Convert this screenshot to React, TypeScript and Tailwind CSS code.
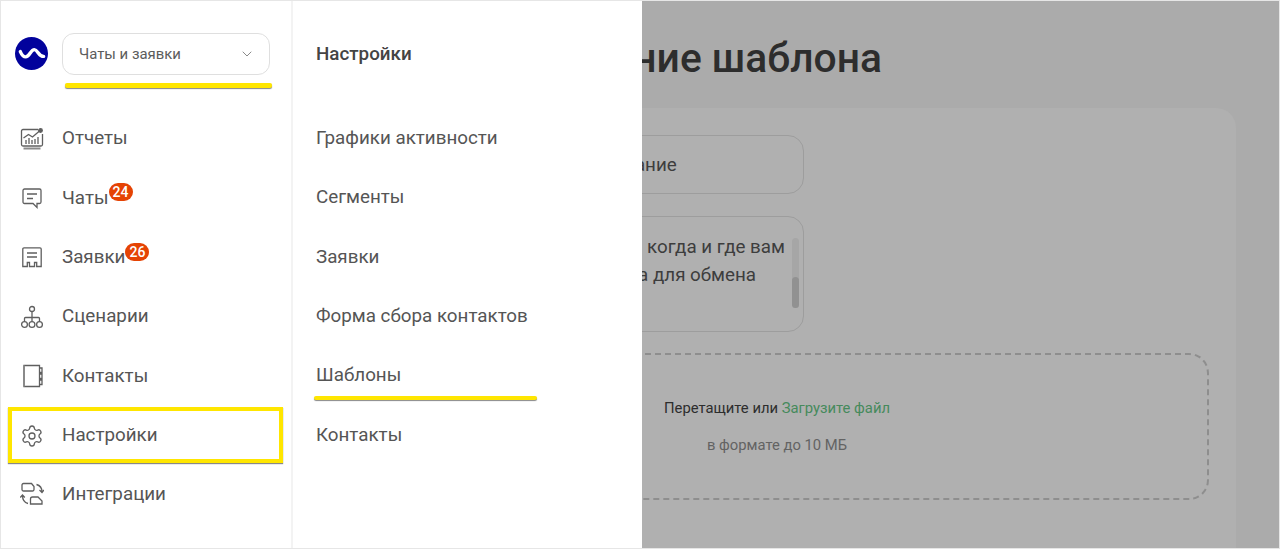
import { ChevronDown, Settings } from "lucide-react";
import type { ReactNode } from "react";

const iconClass = "h-6 w-6 fill-none stroke-[#5f5f5f] stroke-[1.3]";

function ReportsIcon() {
  return (
    <svg viewBox="0 0 24 24" className={iconClass}>
      <path d="M18 2.500H3a1.500 1.500 0 0 0-1.500 1.500v13.500A1.500 1.500 0 0 0 3 19h18a1.500 1.500 0 0 0 1.500-1.500V7" />
      <path d="M3.500 21.500h17" strokeWidth="2" stroke="#8a8a8a" />
      <path d="M3.500 11l5-3.500 4 2.500 7-6" />
      <path d="M6 17v-4M9 17v-6M12 17v-4M15 17v-5M18 17v-7" />
      <circle cx="20.500" cy="3.500" r="1.800" fill="#5f5f5f" />
    </svg>
  );
}

function ChatIcon() {
  return (
    <svg viewBox="0 0 24 24" className={iconClass}>
      <path d="M4.500 3h15A1.500 1.500 0 0 1 21 4.500V16a1.500 1.500 0 0 1-1.500 1.500H17v4l-4-4H4.500A1.500 1.500 0 0 1 3 16V4.500A1.500 1.500 0 0 1 4.500 3z" />
      <path d="M7 8h10M7 12.500h6" />
    </svg>
  );
}

function RequestsIcon() {
  return (
    <svg viewBox="0 0 24 24" className={iconClass}>
      <path d="M2.800 21.500V4a1.200 1.200 0 0 1 1.200-1.200h16A1.200 1.200 0 0 1 21.200 4v17.500h-4.500v-4h-2.200v4h-5v-4H7.300v4z" />
      <path d="M7 8h10M7 12h10" />
    </svg>
  );
}

function ScenariosIcon() {
  return (
    <svg viewBox="0 0 24 24" className={iconClass}>
      <circle cx="12" cy="4" r="2.500" />
      <circle cx="4.500" cy="19.500" r="2.900" />
      <circle cx="12" cy="19.500" r="2.900" />
      <circle cx="19.500" cy="19.500" r="2.900" />
      <path d="M12 6.500v10.100M4.500 16.600V13.500a1 1 0 0 1 1-1h13a1 1 0 0 1 1 1v3.100" />
    </svg>
  );
}

function ContactsIcon() {
  return (
    <svg viewBox="0 0 24 24" className={iconClass}>
      <path d="M4 1.500h15.500v21H4z" />
      <path d="M4 1.500v21" strokeWidth="2" stroke="#8a8a8a" />
      <path d="M19.500 4h2.500v4.500h-2.500M19.500 10h2.500v4.500h-2.500M19.500 16h2.500v4.500h-2.500" />
    </svg>
  );
}

function IntegrationsIcon() {
  return (
    <svg viewBox="0 0 24 24" className={iconClass}>
      <path d="M3.500 1.500h8l2.500 3v3a1.500 1.500 0 0 1-1.500 1.500h-9A1.500 1.500 0 0 1 2 7.500V3a1.500 1.500 0 0 1 1.500-1.500z" />
      <path d="M12.500 15h5.500l4 4v3H10.500v-5a2 2 0 0 1 2-2z" />
      <path d="M16.500 2.500c3 .8 5.500 3.500 5.500 7.500M19.500 8l2.500 2.500L24 8" />
      <path d="M8 21.500c-3-.8-5.500-3.500-5.500-8M.300 15.500l2.200-2.500 2.300 2.500" />
    </svg>
  );
}

const navItems: { label: string; icon: ReactNode; badge?: string; active?: boolean }[] = [
  { label: "Отчеты", icon: <ReportsIcon /> },
  { label: "Чаты", icon: <ChatIcon />, badge: "24" },
  { label: "Заявки", icon: <RequestsIcon />, badge: "26" },
  { label: "Сценарии", icon: <ScenariosIcon /> },
  { label: "Контакты", icon: <ContactsIcon /> },
  { label: "Настройки", icon: <Settings className="h-6 w-6 text-[#5f5f5f]" strokeWidth={1.3} />, active: true },
  { label: "Интеграции", icon: <IntegrationsIcon /> },
];

const subItems = ["Графики активности", "Сегменты", "Заявки", "Форма сбора контактов", "Шаблоны", "Контакты"];

function NavRow({ label, icon, badge, active }: (typeof navItems)[number]) {
  return (
    <div
      className={
        active
          ? "-ml-[1px] mb-[1.7px] mt-[0.7px] flex h-[56px] items-center gap-[18px] border-[4px] border-[#ffe600] pl-[8px] pt-[2px] shadow-[0_1px_1px_#888]"
          : "flex h-[59.4px] items-center gap-[18px] pl-[11px]"
      }
    >
      <span className="flex h-6 w-6 shrink-0 items-center justify-center">{icon}</span>
      <span className="relative text-[18.8px] leading-none text-[#555555]">
        {label}
        {badge ? (
          <span className="absolute bottom-[6px] left-full flex h-[18px] w-6 items-center justify-center rounded-full bg-[#e54304] text-[14px] font-medium text-white">
            {badge}
          </span>
        ) : null}
      </span>
    </div>
  );
}

export default function App() {
  return (
    <div className="flex h-[549px] w-[1280px] overflow-hidden border border-[#e6e6e6] bg-white font-['Roboto',sans-serif]">
      <aside className="w-[292px] shrink-0 border-r-2 border-[#f3f3f3] pl-[8px] pr-[8px]">
        <div className="flex items-start gap-[14px] pl-[6px] pt-[32px]">
          <svg viewBox="0 0 34 34" className="mt-[4px] h-[33px] w-[33px] shrink-0">
            <circle cx="17" cy="17" r="17" fill="#02029c" />
            <path d="M5.500 15c1.500 3.500 3 5.500 5.500 5.500 4 0 5-7.500 9-7.500 3.500 0 4 7 9.500 7" fill="none" stroke="#fff" strokeWidth="3.500" strokeLinecap="round" />
          </svg>
          <div className="flex-1">
            <div className="flex h-[42px] w-[208px] items-center justify-between rounded-[12px] border border-[#dfdfdf] pl-[16px] pr-[14px] text-[14.9px] text-[#5c5c5c]">
              Чаты и заявки
              <ChevronDown className="h-4 w-4 text-[#8a8a8a]" strokeWidth={1.5} />
            </div>
            <div className="ml-[3px] mt-[8px] h-[5px] w-[207px] rounded-[2px] bg-[#ffe600] shadow-[0_1px_1px_#888]" />
          </div>
        </div>
        <nav className="mt-[21px]">
          {navItems.map((item) => (
            <NavRow key={item.label} {...item} />
          ))}
        </nav>
      </aside>

      <section className="w-[349px] shrink-0 pl-[23px] pr-[20px] text-[18.8px] text-[#555555]">
        <h2 className="pt-[43px] text-[18.8px] font-medium leading-[21px] text-[#444444]">Настройки</h2>
        <ul className="mt-[43.3px]">
          {subItems.map((item) => (
            <li key={item} className="relative flex h-[59.4px] items-center">
              {item}
              {item === "Шаблоны" ? (
                <span className="absolute bottom-[5px] left-[-2px] h-[4px] w-[223px] rounded-[2px] bg-[#ffe600] shadow-[0_1px_1px_#888]" />
              ) : null}
            </li>
          ))}
        </ul>
      </section>

      <main className="min-w-0 flex-1 overflow-hidden bg-[#ababab] pt-[39px]">
        <h1 className="flex h-[36px] justify-end whitespace-nowrap pr-[397px] text-[40.8px] font-medium leading-[36px] text-[#2d2d2d]">
          Создание шаблона
        </h1>
        <div className="ml-[-324px] mr-[43px] mt-[32px] h-[480px] rounded-[20px] bg-[#b0b0b0] pl-[27px] pr-[27px] pt-[27px]">
          <div className="ml-[235px] w-[224px]">
            <div className="flex h-[59px] items-center rounded-[16px] border border-[#9d9d9d] pl-[10px] pt-[1px] text-[18.8px] text-[#3d3d3d]">
              Название
            </div>
            <div className="relative mt-[22px] h-[116px] rounded-[16px] border border-[#9d9d9d] pr-[18px] pt-[16px] text-right text-[18.8px] leading-[28px] text-[#3d3d3d]">
              <div className="overflow-hidden whitespace-nowrap">когда и где вам</div>
              <div className="overflow-hidden whitespace-nowrap pr-[29px]">а для обмена</div>
              <div className="absolute right-[4px] top-[21px] h-[70px] w-[7px] rounded-full bg-[#a6a6a6]">
                <div className="mt-[39px] h-[31px] rounded-full bg-[#919191]" />
              </div>
            </div>
          </div>
          <div className="mt-[21px] flex h-[147px] flex-col items-center rounded-[20px] border-2 border-dashed border-[#8e8e8e] pt-[44px] text-[14.8px] leading-[18px]">
            <p className="text-[#2d2d2d]">
              Перетащите или <span className="text-[#468a5c]">Загрузите файл</span>
            </p>
            <p className="mt-[19px] text-[#636363]">в формате до 10 МБ</p>
          </div>
        </div>
      </main>
    </div>
  );
}
